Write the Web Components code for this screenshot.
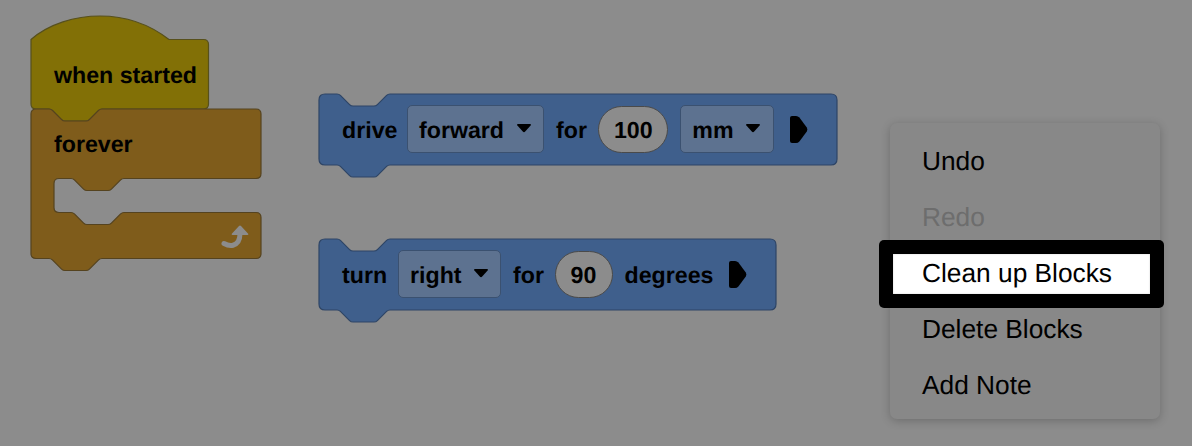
<!DOCTYPE html>
<html>
<head>
<meta charset="utf-8">
<style>
  html, body { margin: 0; height: 100%; }
  body { background: #8c8c8c; overflow: hidden; font-family: "Liberation Sans", Arial, sans-serif; }
</style>
</head>
<body>
<block-canvas>
  <hat-block style="left:31px;top:15.5px"><block-label>when started</block-label></hat-block>
  <loop-block style="left:31px;top:108.5px"><block-label>forever</block-label></loop-block>

  <stack-block style="left:318.5px;top:93.5px" width="518">
    <block-label width="53">drive</block-label>
    <block-dropdown width="137">forward</block-dropdown>
    <block-label width="30.3">for</block-label>
    <block-pill width="70">100</block-pill>
    <block-dropdown width="93.5">mm</block-dropdown>
    <block-play></block-play>
  </stack-block>

  <stack-block style="left:318.5px;top:238.5px" width="457">
    <block-label width="44">turn</block-label>
    <block-dropdown width="103">right</block-dropdown>
    <block-label width="29.5">for</block-label>
    <block-pill width="58">90</block-pill>
    <block-label width="88">degrees</block-label>
    <block-play></block-play>
  </stack-block>
</block-canvas>

<context-menu>
  <menu-item>Undo</menu-item>
  <menu-item disabled>Redo</menu-item>
  <menu-item highlighted>Clean up Blocks</menu-item>
  <menu-item>Delete Blocks</menu-item>
  <menu-item>Add Note</menu-item>
</context-menu>

<script>
const BLOCK_FONT = 'bold 23.2px/26px "Liberation Sans", Arial, sans-serif'

// the little connector bump, going left to right
const notch = (x, y) => `L${x - 2} ${y} Q${x} ${y} ${x + 1.4} ${y + 1.4} L${x + 10.6} ${y + 10.6} Q${x + 12} ${y + 12} ${x + 14} ${y + 12} ` +
  `L${x + 35} ${y + 12} Q${x + 37} ${y + 12} ${x + 38.4} ${y + 10.6} L${x + 47.6} ${y + 1.4} Q${x + 49} ${y} ${x + 51} ${y} `
// same thing, right to left
const notchBack = (x, y) => `L${x + 51} ${y} Q${x + 49} ${y} ${x + 47.6} ${y + 1.4} L${x + 38.4} ${y + 10.6} Q${x + 37} ${y + 12} ${x + 35} ${y + 12} ` +
  `L${x + 14} ${y + 12} Q${x + 12} ${y + 12} ${x + 10.6} ${y + 10.6} L${x + 1.4} ${y + 1.4} Q${x} ${y} ${x - 2} ${y} `

const shapeStyle = `
  :host { display: block; position: absolute; }
  svg { position: absolute; left: 0; top: 0; overflow: visible; display: block; }
  path { stroke-width: 1.2; stroke-linejoin: round; }
`

customElements.define('block-canvas',
  class extends HTMLElement {
    constructor () {
      super()
      this.attachShadow({ mode: 'open' }).innerHTML = `
        <style>:host { display: block; position: relative; width: 1192px; height: 446px; }</style>
        <slot></slot>`
    }
  }
)

customElements.define('block-label',
  class extends HTMLElement {
    constructor () {
      super()
      const width = this.getAttribute('width')
      this.attachShadow({ mode: 'open' }).innerHTML = `
        <style>
          :host {
            display: block; ${width ? `width: ${width}px; flex: none;` : ''}
            font: ${BLOCK_FONT}; text-rendering: geometricPrecision; color: #000; white-space: nowrap; padding-top: 2px;
          }
        </style>
        <slot></slot>`
    }
  }
)

customElements.define('block-dropdown',
  class extends HTMLElement {
    constructor () {
      super()
      const width = this.getAttribute('width')
      this.attachShadow({ mode: 'open' }).innerHTML = `
        <style>
          :host {
            display: flex; flex: none; align-items: center; justify-content: space-between; box-sizing: border-box;
            width: ${width}px; height: 48px; padding: 2px 11.5px 0 11px;
            background: #5d7290; border: 1px solid #3b5170; border-radius: 5px;
            font: ${BLOCK_FONT}; text-rendering: geometricPrecision; color: #000; white-space: nowrap;
          }
          svg { display: block; margin-top: -4px; }
        </style>
        <span><slot></slot></span>
        <svg width="16" height="10" viewBox="0 0 16 10"><path d="M2 1 H14 Q15.6 1 14.6 2.4 L9.2 8.6 Q8 9.8 6.8 8.6 L1.4 2.4 Q0.4 1 2 1 Z" fill="#000"/></svg>`
    }
  }
)

customElements.define('block-pill',
  class extends HTMLElement {
    constructor () {
      super()
      const width = this.getAttribute('width')
      this.attachShadow({ mode: 'open' }).innerHTML = `
        <style>
          :host {
            display: flex; flex: none; align-items: center; justify-content: center; box-sizing: border-box;
            width: ${width}px; height: 47px; padding-top: 2px; background: #8c8c8c; border: 1px solid #4a4a4a; border-radius: 23.5px;
            font: ${BLOCK_FONT}; text-rendering: geometricPrecision; color: #000;
          }
        </style>
        <slot></slot>`
    }
  }
)

customElements.define('block-play',
  class extends HTMLElement {
    constructor () {
      super()
      this.attachShadow({ mode: 'open' }).innerHTML = `
        <style>
          :host { display: block; flex: none; width: 19px; height: 29px; margin-left: 3.5px; }
          svg { display: block; }
        </style>
        <svg width="19" height="29" viewBox="0 0 19 29">
          <path d="M3 1 H7 Q9 1 10.4 2.6 L17.8 12.6 Q19 14.5 17.8 16.4 L10.4 26.4 Q9 28 7 28 H3 Q1 28 1 26 V3 Q1 1 3 1 Z" fill="#000"/>
        </svg>`
    }
  }
)

customElements.define('stack-block',
  class extends HTMLElement {
    constructor () {
      super()
      const w = parseFloat(this.getAttribute('width'))
      const h = 71
      const r = 6
      const d = `M${r} 0 ${notch(20, 0)}L${w - r} 0 Q${w} 0 ${w} ${r} L${w} ${h - r} Q${w} ${h} ${w - r} ${h} ` +
        `${notchBack(20, h)}L${r} ${h} Q0 ${h} 0 ${h - r} L0 ${r} Q0 0 ${r} 0 Z`
      this.attachShadow({ mode: 'open' }).innerHTML = `
        <style>
          ${shapeStyle}
          :host { width: ${w}px; height: ${h}px; }
          path { fill: #3f5f8c; stroke: #2e4566; }
          .row { position: relative; display: flex; align-items: center; gap: 12px; height: 100%; padding: 0 0 0 23.5px; box-sizing: border-box; }
        </style>
        <svg width="${w}" height="${h + 12}"><path d="${d}"/></svg>
        <div class="row"><slot></slot></div>`
    }
  }
)

customElements.define('hat-block',
  class extends HTMLElement {
    constructor () {
      super()
      const d = 'M0 23.5 C18 8 44 0 69 0 C94 0 118 8 138 23.5 L172.5 23.5 Q177.5 23.5 177.5 28.5 L177.5 88 Q177.5 93 172.5 93 ' +
        notchBack(20, 93) + 'L5 93 Q0 93 0 88 Z'
      this.attachShadow({ mode: 'open' }).innerHTML = `
        <style>
          ${shapeStyle}
          :host { width: 178px; height: 93px; }
          path { fill: #827006; stroke: #57501c; }
          .row { position: absolute; left: 23px; top: 44.5px; }
        </style>
        <svg width="178" height="105"><path d="${d}"/></svg>
        <div class="row"><slot></slot></div>`
    }
  }
)

customElements.define('loop-block',
  class extends HTMLElement {
    constructor () {
      super()
      const w = 230
      const d = `M5 0 ${notch(20, 0)}L${w - 5} 0 Q${w} 0 ${w} 5 L${w} 64.5 Q${w} 69.5 ${w - 5} 69.5 ` +
        `${notchBack(42, 69.5)}L28 69.5 Q23 69.5 23 74.5 L23 98.5 Q23 103.5 28 103.5 ` +
        `${notch(42, 103.5)}L${w - 5} 103.5 Q${w} 103.5 ${w} 108.5 L${w} 144.5 Q${w} 149.5 ${w - 5} 149.5 ` +
        `${notchBack(20, 149.5)}L5 149.5 Q0 149.5 0 144.5 L0 5 Q0 0 5 0 Z`
      this.attachShadow({ mode: 'open' }).innerHTML = `
        <style>
          ${shapeStyle}
          :host { width: ${w}px; height: 150px; }
          .body { fill: #7f5c1b; stroke: #55431f; }
          .row { position: absolute; left: 23px; top: 20.5px; }
          .loop-arrow { left: 190px; top: 115px; }
        </style>
        <svg width="${w}" height="162"><path class="body" d="${d}"/></svg>
        <div class="row"><slot></slot></div>
        <svg class="loop-arrow" width="28" height="26" viewBox="0 0 28 26">
          <path d="M3 19.5 Q8 22.2 12 21.2 Q18.8 19.5 19 10" fill="none" stroke="#8c8c8c" style="stroke-width:5" stroke-linecap="round"/>
          <path d="M19 1.5 Q19.6 1.5 20 2 L27.2 9.8 Q27.8 11 26.5 11 H11.5 Q10.2 11 10.8 9.8 L18 2 Q18.4 1.5 19 1.5 Z" fill="#8c8c8c" style="stroke:none"/>
        </svg>`
    }
  }
)

customElements.define('context-menu',
  class extends HTMLElement {
    constructor () {
      super()
      this.attachShadow({ mode: 'open' }).innerHTML = `
        <style>
          :host {
            display: flex; flex-direction: column; position: absolute; left: 890px; top: 123px;
            width: 270px; height: 296px; box-sizing: border-box; padding: 10px 0;
            background: #888888; border-radius: 7px; box-shadow: 0 2px 10px rgba(0, 0, 0, .22);
          }
        </style>
        <slot></slot>`
    }
  }
)

customElements.define('menu-item',
  class extends HTMLElement {
    constructor () {
      super()
      this.attachShadow({ mode: 'open' }).innerHTML = `
        <style>
          :host {
            display: block; position: relative; height: 56px; box-sizing: border-box; padding-left: 32px;
            font: 26.3px/56px "Liberation Sans", Arial, sans-serif; text-rendering: geometricPrecision; color: #000; white-space: nowrap;
          }
          :host([disabled]) { color: #6d6d6d; }
          .text { position: relative; }
          .ring { display: none; }
          :host([highlighted]) .ring {
            display: block; position: absolute; left: 3px; right: 10px; top: 9px; bottom: 7px; background: #fff;
            box-shadow: inset 0 0 2px #ccc;
          }
          :host([highlighted]) .ring::before {
            content: ""; position: absolute; z-index: -1; left: -14px; right: -13.5px; top: -14px; bottom: -14px;
            background: #000; border-radius: 5px;
          }
          :host([highlighted]) { z-index: 1; }
        </style>
        <div class="ring"></div>
        <span class="text"><slot></slot></span>`
    }
  }
)
</script>
</body>
</html>
